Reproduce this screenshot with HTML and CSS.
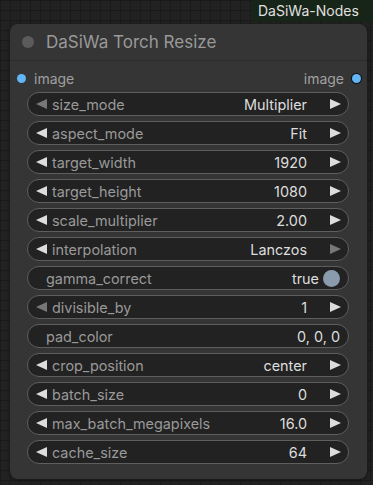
FILE: index.html
```html
<!DOCTYPE html>
<html lang="en">
<head>
    <meta charset="UTF-8">
    <meta name="viewport" content="width=device-width, initial-scale=1.0">
    <title>DaSiWa Torch Resize</title>
    <link rel="stylesheet" href="styles.css">
</head>
<body>

    <div class="badge-row">
        <div class="badge">DaSiWa-Nodes</div>
    </div>

    <div class="node">
        <div class="node-title">
            <span class="title-dot"></span>
            <span class="title-text">DaSiWa Torch Resize</span>
        </div>

        <div class="slots">
            <div class="slot"><span class="slot-dot"></span>image</div>
            <div class="slot">image<span class="slot-dot out"></span></div>
        </div>

        <div class="widgets">
            <div class="widget">
                <span class="arrow left off"></span>
                <span class="label">size_mode</span>
                <span class="value">Multiplier</span>
                <span class="arrow right"></span>
            </div>
            <div class="widget">
                <span class="arrow left"></span>
                <span class="label">aspect_mode</span>
                <span class="value">Fit</span>
                <span class="arrow right"></span>
            </div>
            <div class="widget">
                <span class="arrow left"></span>
                <span class="label">target_width</span>
                <span class="value">1920</span>
                <span class="arrow right"></span>
            </div>
            <div class="widget">
                <span class="arrow left"></span>
                <span class="label">target_height</span>
                <span class="value">1080</span>
                <span class="arrow right"></span>
            </div>
            <div class="widget">
                <span class="arrow left"></span>
                <span class="label">scale_multiplier</span>
                <span class="value">2.00</span>
                <span class="arrow right"></span>
            </div>
            <div class="widget">
                <span class="arrow left"></span>
                <span class="label">interpolation</span>
                <span class="value">Lanczos</span>
                <span class="arrow right off"></span>
            </div>
            <div class="widget plain">
                <span class="label">gamma_correct</span>
                <span class="value">true</span>
                <span class="toggle"></span>
            </div>
            <div class="widget">
                <span class="arrow left off"></span>
                <span class="label">divisible_by</span>
                <span class="value">1</span>
                <span class="arrow right"></span>
            </div>
            <div class="widget plain">
                <span class="label">pad_color</span>
                <span class="value">0, 0, 0</span>
            </div>
            <div class="widget">
                <span class="arrow left"></span>
                <span class="label">crop_position</span>
                <span class="value">center</span>
                <span class="arrow right"></span>
            </div>
            <div class="widget">
                <span class="arrow left"></span>
                <span class="label">batch_size</span>
                <span class="value">0</span>
                <span class="arrow right"></span>
            </div>
            <div class="widget">
                <span class="arrow left"></span>
                <span class="label">max_batch_megapixels</span>
                <span class="value">16.0</span>
                <span class="arrow right"></span>
            </div>
            <div class="widget">
                <span class="arrow left"></span>
                <span class="label">cache_size</span>
                <span class="value">64</span>
                <span class="arrow right"></span>
            </div>
        </div>
    </div>

</body>
</html>
```

FILE: styles.css
```css
html, body {
    height: 100%;
}
body {
    margin: 0;
    font-family: Inter, "Noto Sans", Arial, sans-serif;
    background-color: #222222;
    background-image:
        linear-gradient(to right, #1a1a1a 1px, transparent 1px),
        linear-gradient(to bottom, #1a1a1a 1px, transparent 1px);
    background-size: 10px 10px;
    display: flex;
    flex-direction: column;
}
.badge-row {
    display: flex;
    justify-content: flex-end;
}
.badge {
    width: 121px;
    height: 22px;
    box-sizing: border-box;
    padding-left: 6px;
    background: #172418;
    color: #e0e0e0;
    font-size: 14px;
    line-height: 21px;
}
.node {
    margin: 2px 0 0 10px;
    width: 357px;
    height: 455px;
    box-sizing: border-box;
    background: #353535;
    border-radius: 8px;
    box-shadow: 0 1px 4px rgba(0, 0, 0, 0.4);
    display: flex;
    flex-direction: column;
}
.node-title {
    height: 37px;
    box-sizing: border-box;
    border-bottom: 1px solid #2c2c2c;
    display: flex;
    align-items: center;
    padding-left: 12px;
    gap: 12px;
}
.title-dot {
    width: 12px;
    height: 12px;
    border-radius: 50%;
    background: #5b5b5b;
}
.title-text {
    color: #999;
    font-size: 17px;
}
.slots {
    height: 31px;
    box-sizing: border-box;
    padding: 3px 6px 0 7px;
    display: flex;
    justify-content: space-between;
    align-items: center;
    color: #a0a0a0;
    font-size: 14px;
}
.slot {
    display: flex;
    align-items: center;
    gap: 8px;
}
.slot-dot {
    width: 9px;
    height: 9px;
    border-radius: 50%;
    background: #64b5f6;
}
.slot-dot.out {
    box-shadow: 0 0 0 1px #111;
}
.widgets {
    display: flex;
    flex-direction: column;
    gap: 5px;
    padding: 0 18px 0 17px;
}
.widget {
    height: 24px;
    box-sizing: border-box;
    border: 1px solid #5e5e5e;
    border-radius: 12px;
    background: #222222;
    display: flex;
    align-items: center;
    padding: 0 7px 0 8px;
    font-size: 14.4px;
}
.widget.plain {
    padding: 0 8px 0 18px;
}
.label {
    color: #999;
    flex: 1;
    margin-left: 5px;
}
.widget.plain .label {
    margin-left: 0;
}
.value {
    color: #dddddd;
    margin-right: 23px;
}
.widget.plain .value {
    margin-right: 0;
}
.arrow {
    width: 0;
    height: 0;
    border-top: 5px solid transparent;
    border-bottom: 5px solid transparent;
}
.arrow.left {
    border-right: 11px solid #dddddd;
}
.arrow.right {
    border-left: 11px solid #dddddd;
}
.arrow.left.off {
    border-right-color: #777;
}
.arrow.right.off {
    border-left-color: #777;
}
.toggle {
    width: 17px;
    height: 17px;
    border-radius: 50%;
    background: #8a9bae;
    margin: 0 0 0 4px;
}
```
